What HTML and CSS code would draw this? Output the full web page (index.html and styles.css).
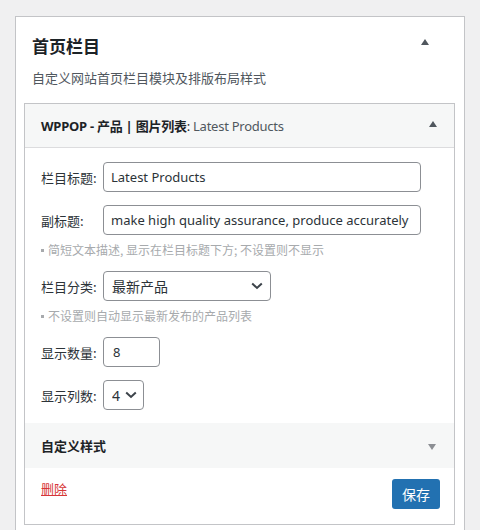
FILE: index.html
```html
<!DOCTYPE html>
<html lang="zh-CN">
<head>
<meta charset="utf-8">
<title>首页栏目</title>
<link rel="stylesheet" href="styles.css">
</head>
<body>
<div class="card">
  <div class="card-head">
    <h2 class="card-title">首页栏目</h2>
    <span class="tri tri-up tri-top"></span>
  </div>
  <p class="card-desc">自定义网站首页栏目模块及排版布局样式</p>

  <div class="widget">
    <div class="widget-head">
      <span class="widget-title"><b>WPPOP - 产品 | 图片列表</b>: <span class="widget-sub">Latest Products</span></span>
      <span class="tri tri-up"></span>
    </div>
    <div class="widget-body">
      <div class="row r1">
        <label class="lbl">栏目标题:</label>
        <input class="txt wide" type="text" value="Latest Products">
      </div>
      <div class="row r2">
        <label class="lbl">副标题:</label>
        <input class="txt wide" type="text" value="make high quality assurance, produce accurately">
      </div>
      <p class="hint">简短文本描述, 显示在栏目标题下方; 不设置则不显示</p>
      <div class="row r3">
        <label class="lbl">栏目分类:</label>
        <div class="sel-wrap sel-cat">
          <select class="sel"><option>最新产品</option></select>
          <svg class="chev" width="12" height="8" viewBox="0 0 12 8"><path d="M1.2 1.5 6 6 10.8 1.5" fill="none" stroke="#3c434a" stroke-width="2"/></svg>
        </div>
      </div>
      <p class="hint">不设置则自动显示最新发布的产品列表</p>
      <div class="row r4">
        <label class="lbl">显示数量:</label>
        <input class="txt num" type="text" value="8">
      </div>
      <div class="row r5">
        <label class="lbl">显示列数:</label>
        <div class="sel-wrap sel-col">
          <select class="sel"><option>4</option></select>
          <svg class="chev" width="12" height="8" viewBox="0 0 12 8"><path d="M1.2 1.5 6 6 10.8 1.5" fill="none" stroke="#3c434a" stroke-width="2"/></svg>
        </div>
      </div>
    </div>
    <div class="section">
      <span class="section-title">自定义样式</span>
      <span class="tri tri-down"></span>
    </div>
    <div class="widget-foot">
      <a class="del" href="#">删除</a>
      <button class="btn" type="button">保存</button>
    </div>
  </div>
</div>
</body>
</html>
```
FILE: styles.css
```css
* { box-sizing: border-box; }
html, body { margin: 0; }
body {
  background: #f0f0f1;
  padding: 16px 15px 0;
  font-family: "Noto Sans", "Noto Sans CJK SC", sans-serif;
  color: #1d2327;
  overflow: hidden;
}
.card {
  width: 450px;
  background: #fff;
  border: 1px solid #c3c4c7;
  padding: 0 9px 40px 8px;
}
.card-head {
  display: flex;
  align-items: center;
  justify-content: space-between;
  padding: 16px 26px 0 8px;
  height: 41px;
}
.card-title {
  margin: 0;
  font-size: 17px;
  line-height: 24px;
  font-weight: 700;
  font-family: "Noto Sans CJK SC", sans-serif;
}
.tri {
  width: 0; height: 0;
  border-left: 4px solid transparent;
  border-right: 4px solid transparent;
}
.tri-up { border-bottom: 6px solid #50575e; }
.tri-top { margin-top: -7px; }
.tri-down { border-top: 6px solid #8c8f94; margin-top: 3px; }
.card-desc {
  margin: 10px 0 0 8px;
  font-size: 13px;
  line-height: 20px;
  color: #50575e;
  font-family: "Noto Sans CJK SC", sans-serif;
}
.widget {
  margin-top: 15px;
  border: 1px solid #c3c4c7;
}
.widget-head {
  height: 44px;
  background: #f6f7f7;
  border-bottom: 1px solid #dcdcde;
  display: flex;
  align-items: center;
  justify-content: space-between;
  padding: 0 17px 0 16px;
  font-size: 13px;
}
.widget-head .tri { margin-top: -3px; }
.widget-title { letter-spacing: -0.25px; }
.widget-title b { font-weight: 700; color: #1d2327; }
.widget-sub { color: #50575e; }
.widget-body { padding: 0 16px; }
.row { display: flex; align-items: center; height: 30px; }
.r1 { margin-top: 14px; }
.r2 { margin-top: 13px; }
.r3 { margin-top: 12px; }
.r4 { margin-top: 12px; }
.r5 { margin-top: 13px; }
.lbl {
  width: 62px;
  flex: none;
  font-size: 13px;
  color: #2c3338;
  font-family: "Noto Sans CJK SC", sans-serif;
}
.txt, .sel {
  height: 30px;
  border: 1px solid #8c8f94;
  border-radius: 4px;
  background: #fff;
  color: #2c3338;
  font-family: "Noto Sans", "Noto Sans CJK SC", sans-serif;
  font-size: 13px;
  padding: 0 7px;
  margin: 0;
  outline: none;
}
.wide { width: 318px; }
.num { width: 57px; padding-left: 9px; }
.sel-wrap { position: relative; }
.sel {
  appearance: none;
  -webkit-appearance: none;
  padding-left: 8px;
  width: 100%;
  font-size: 14px;
}
.sel-cat { width: 168px; }
.sel-col { width: 41px; }
.chev { position: absolute; top: 11px; right: 8px; }
.sel-cat .chev { right: 8px; }
.sel-col .chev { right: 7px; }
.hint {
  margin: 6px 0 0;
  font-size: 12px;
  line-height: 18px;
  color: #a7aaad;
  font-family: "Noto Sans CJK SC", sans-serif;
}
.hint::before {
  content: "";
  display: inline-block;
  width: 3px; height: 3px;
  background: #a7aaad;
  vertical-align: middle;
  margin: 0 4px 2px 0;
}
.section {
  margin-top: 13px;
  height: 45px;
  background: #f6f7f7;
  display: flex;
  align-items: center;
  justify-content: space-between;
  padding: 0 18px 0 16px;
}
.section-title {
  font-size: 13px;
  font-weight: 700;
  color: #1d2327;
  font-family: "Noto Sans CJK SC", sans-serif;
}
.widget-foot {
  display: flex;
  justify-content: space-between;
  align-items: flex-start;
  padding: 11px 14px 15px 16px;
}
.del {
  color: #d63638;
  font-size: 13px;
  line-height: 20px;
  font-family: "Noto Sans CJK SC", sans-serif;
  text-decoration: underline;
}
.btn {
  width: 48px;
  height: 30px;
  border: 0;
  border-radius: 3px;
  background: #2271b1;
  color: #fff;
  font-size: 14px;
  font-family: "Noto Sans CJK SC", sans-serif;
  padding: 0;
}
```
